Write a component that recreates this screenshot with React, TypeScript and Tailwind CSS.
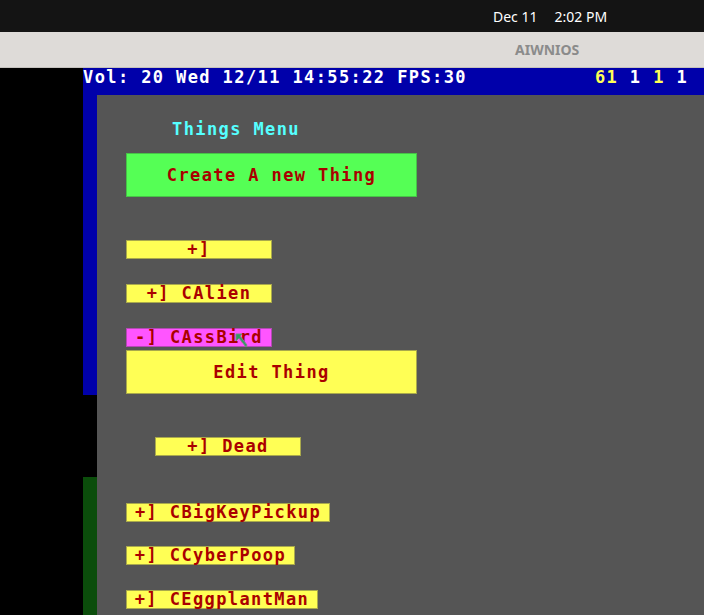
const mono = "font-['DejaVu_Sans_Mono','Liberation_Mono',monospace] font-bold text-[17px] leading-[16px] tracking-[1.4px]";

function Item({ label, width, ml = 'ml-[29px]', mt, pink = false }: { label: string; width: string; ml?: string; mt: string; pink?: boolean }) {
  return (
    <div
      className={`${ml} ${mt} ${width} h-[19px] pb-[1px] flex items-center justify-center border whitespace-pre text-[#aa0000] ${
        pink ? 'bg-[#ff55ff] border-[#b548b5]' : 'bg-[#ffff55] border-[#a9a94c]'
      }`}
    >
      {label}
    </div>
  );
}

export default function App() {
  return (
    <div className="relative w-[704px] h-[615px] overflow-hidden flex flex-col bg-black">
      {/* GNOME top bar */}
      <div className="h-[32px] shrink-0 bg-[#141414] flex items-center font-['Noto_Sans',sans-serif] text-[14px] text-white">
        <span className="ml-[493px]">Dec 11</span>
        <span className="ml-[17px]">2:02 PM</span>
      </div>
      {/* window title */}
      <div className="h-[36px] shrink-0 bg-[#dedbd8] border-b border-[#c4c1bd] flex items-center font-['Noto_Sans',sans-serif] font-bold text-[14px] text-[#8b8b8b]">
        <span className="ml-[515px]">AIWNIOS</span>
      </div>

      <div className="flex flex-1 min-h-0">
        <div className="w-[83px] shrink-0 bg-black" />
        <div className="flex-1 flex flex-col min-w-0">
          {/* status line */}
          <div className={`${mono} h-[27px] shrink-0 bg-[#0000aa] text-white whitespace-pre pt-[1px]`}>
            {'Vol: 20 Wed 12/11 14:55:22 FPS:30           '}
            <span className="text-[#ffff55]">61</span>
            {' 1 '}
            <span className="text-[#ffff55]">1</span>
            {' 1'}
          </div>
          <div className="flex flex-1 min-h-0">
            {/* left strip of the blue backdrop */}
            <div className="w-[14px] shrink-0 flex flex-col">
              <div className="h-[300px] bg-[#0000aa]" />
              <div className="h-[82px] bg-black" />
              <div className="flex-1 bg-[#0b4d0b]" />
            </div>
            {/* Things menu window */}
            <div className={`${mono} flex-1 bg-[#555555] flex flex-col overflow-hidden`}>
              <div className="ml-[75px] mt-[26px] text-[#55ffff]">Things Menu</div>
              <div className="ml-[29px] mt-[16px] w-[291px] h-[44px] shrink-0 bg-[#55ff55] border border-[#47c347] flex items-center justify-center text-[#aa0000]">
                Create A new Thing
              </div>
              <Item label="+]" width="w-[146px]" mt="mt-[43px]" />
              <Item label="+] CAlien" width="w-[146px]" mt="mt-[25px]" />
              <Item label="-] CAssBird" width="w-[146px]" mt="mt-[25px]" pink />
              <div className="ml-[29px] mt-[3px] w-[291px] h-[44px] shrink-0 bg-[#ffff55] border border-[#a9a94c] flex items-center justify-center text-[#aa0000]">
                Edit Thing
              </div>
              <Item label="+] Dead" width="w-[146px]" ml="ml-[58px]" mt="mt-[43px]" />
              <Item label="+] CBigKeyPickup" width="w-[204px]" mt="mt-[47px]" />
              <Item label="+] CCyberPoop" width="w-[169px]" mt="mt-[24px]" />
              <Item label="+] CEggplantMan" width="w-[192px]" mt="mt-[25px]" />
            </div>
          </div>
        </div>
      </div>

      {/* mouse pointer */}
      <svg className="absolute left-[235px] top-[333px]" width="14" height="16" viewBox="0 0 14 16">
        <path d="M1 1 L7 1 L5 3 L12 12 L11 14 L4 5 L1 8 Z" fill="#2f9b63" stroke="#6f8f7f" strokeWidth="1" />
      </svg>
    </div>
  );
}
